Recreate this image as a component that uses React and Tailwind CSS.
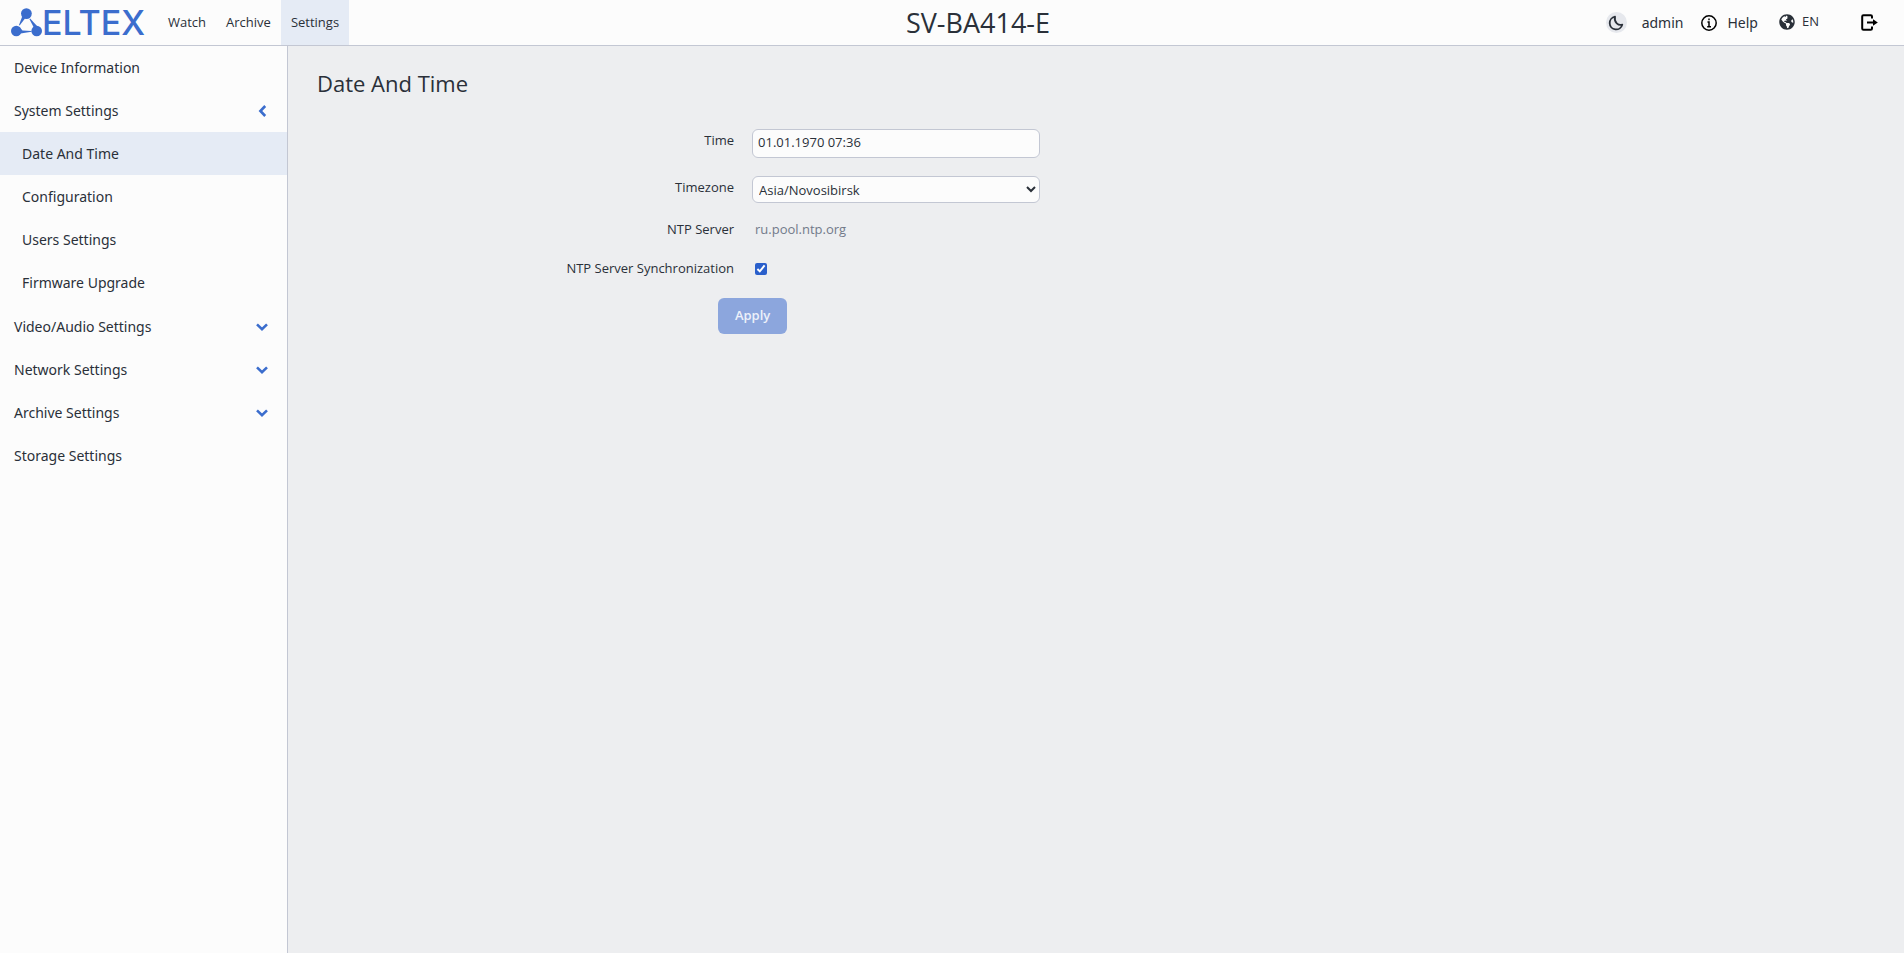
import { useState } from "react";
import { FaGlobeAmericas } from "react-icons/fa";

const tabs = ["Watch", "Archive", "Settings"];

const menu = [
    { title: "Device Information" },
    {
        title: "System Settings",
        children: ["Date And Time", "Configuration", "Users Settings", "Firmware Upgrade"],
    },
    { title: "Video/Audio Settings", children: [] },
    { title: "Network Settings", children: [] },
    { title: "Archive Settings", children: [] },
    { title: "Storage Settings" },
];

function Logo() {
    return (
        <a href="#" aria-label="Eltex" className="flex items-center pl-[11px] w-[158px] text-[#3b6dcd]">
            <svg viewBox="0 0 31 29" className="w-[31px] h-[29px] shrink-0" fill="currentColor">
                <circle cx="15.4" cy="5.6" r="5.4" />
                <circle cx="5.3" cy="23" r="5.3" />
                <circle cx="25.7" cy="23" r="5.3" />
                <path d="M11.2 8.5 14 10.6 8.6 17.4 8 17Z" />
                <path d="M18.4 11 19.1 10.600 26.500 18.500 22.800 19.500Z" />
                <path d="M9.500 20.500 11.500 22.600 20.600 23V23.700L9.500 25.500Z" />
            </svg>
            <span className="font-['Inter',sans-serif] text-[34px] font-medium leading-8">ELTEX</span>
        </a>
    );
}

function Chevron({ open }) {
    return (
        <svg viewBox="0 0 12 12" className="w-3 h-3 text-[#3b6dcd]" fill="none" stroke="currentColor" strokeWidth="2.6">
            <path d={open ? "M9.2 1 4.4 6l4.800 5" : "M1 3.4l5 4.8 5-4.8"} />
        </svg>
    );
}

function Header() {
    return (
        <header className="flex h-[46px] shrink-0 items-stretch border-b border-[#c3c7d3] bg-[#fcfcfc]">
            <div className="flex flex-1">
                <Logo />
                <nav className="flex text-[13px]">
                    {tabs.map(tab => (
                        <a key={tab} href="#"
                            className={`flex items-center px-2.5 ${tab === "Settings" ? "bg-[#e5ebf5]" : ""}`}>
                            {tab}
                        </a>
                    ))}
                </nav>
            </div>
            <div className="flex items-center pl-[52px] text-[27px] leading-10">SV-BA414-E</div>
            <div className="flex flex-1 items-center justify-end font-['Noto_Sans',sans-serif] text-sm">
                <button type="button" aria-label="Theme"
                    className="flex w-[21px] h-[21px] items-center justify-center rounded-full bg-[#e6e8ed]">
                    <svg viewBox="0 0 16 16" className="w-4 h-4" fill="none" stroke="currentColor" strokeWidth="1.8" strokeLinejoin="round">
                        <path d="M7 1.700A6.400 6.400 0 1 0 14.300 9.600C10.500 11 5.800 7.400 7 1.700Z" />
                    </svg>
                </button>
                <span className="ml-[15px]">admin</span>
                <a href="#" className="ml-[18px] flex items-center gap-2.5">
                    <svg viewBox="0 0 16 16" className="w-4 h-4 text-black" fill="none" stroke="currentColor">
                        <circle cx="8" cy="8" r="7.200" strokeWidth="1.500" />
                        <path d="M8 3.500V5.300M6.500 7H8v4.500M6.200 11.800h3.800" strokeWidth="1.500" />
                    </svg>
                    Help
                </a>
                <button type="button" className="ml-[21px] mb-0.5 flex items-center gap-[7px] font-['Open_Sans',sans-serif] text-[13px]">
                    <FaGlobeAmericas className="w-4 h-4" />
                    EN
                </button>
                <a href="#" aria-label="Log out" className="ml-[42px] mr-[26px] text-black">
                    <svg viewBox="0 0 17 17" className="w-[17px] h-[17px]" fill="none" stroke="currentColor" strokeWidth="2">
                        <path d="M11 4.500V2.500Q11 1.200 9.700 1.200H2.500Q1.200 1.200 1.200 2.500v12Q1.200 15.800 2.500 15.800h7.200q1.300 0 1.300-1.300v-2" />
                        <path d="M6 8.500h8" />
                        <path d="M12 5.200 16.800 8.500 12 11.800Z" fill="currentColor" stroke="none" />
                    </svg>
                </a>
            </div>
        </header>
    );
}

function Sidebar({ page, setPage }) {
    return (
        <aside className="w-72 shrink-0 border-r border-[#c3c7d3] bg-[#fcfcfc] font-['Noto_Sans',sans-serif] text-sm">
            <ul>
                {menu.map(item => (
                    <li key={item.title}>
                        <button type="button" className="flex h-[43px] w-full items-center justify-between pl-3.5 pr-[19px]">
                            {item.title}
                            {item.children && <Chevron open={item.children.length > 0} />}
                        </button>
                        {item.children?.length > 0 && (
                            <ul className="pb-px">
                                {item.children.map(child => (
                                    <li key={child}>
                                        <button type="button" onClick={() => setPage(child)}
                                            className={`flex h-[43px] w-full items-center pl-[22px] ${page === child ? "bg-[#e5ebf5]" : ""}`}>
                                            {child}
                                        </button>
                                    </li>
                                ))}
                            </ul>
                        )}
                    </li>
                ))}
            </ul>
        </aside>
    );
}

function Row({ id, label, children, className }) {
    return (
        <div className={`flex gap-[18px] ${className}`}>
            <label htmlFor={id} className="w-[27.6%] shrink-0 text-right leading-[22px]">{label}</label>
            {children}
        </div>
    );
}

function DateTimeForm() {
    const [time, setTime] = useState("01.01.1970 07:36");
    const [sync, setSync] = useState(true);

    return (
        <form className="mt-8 text-[13px]">
            <Row id="time" label="Time" className="h-[47px]">
                <input id="time" value={time} onChange={e => setTime(e.target.value)}
                    className="h-[29px] w-72 rounded-md border border-[#c3c7d3] bg-[#fcfcfc] px-[5px] pb-[3px]" />
            </Row>
            <Row id="timezone" label="Timezone" className="h-[42px]">
                <select id="timezone" className="h-[27px] w-72 rounded-md border border-[#c3c7d3] bg-[#fcfcfc] px-0.5">
                    <option>Asia/Novosibirsk</option>
                </select>
            </Row>
            <Row id="ntp" label="NTP Server" className="h-[39px]">
                <input id="ntp" placeholder="ru.pool.ntp.org" readOnly
                    className="h-[22px] w-72 px-[3px] placeholder:text-[#727a8a]" />
            </Row>
            <Row id="sync" label="NTP Server Synchronization" className="h-[41px]">
                <input id="sync" type="checkbox" checked={sync} onChange={e => setSync(e.target.checked)}
                    className="ml-[3px] mt-1.5 h-3 w-3 accent-[#2a5fcb]" />
            </Row>
            <div className="flex w-[57.5%] justify-center">
                <button type="button" disabled
                    className="h-9 rounded-md bg-[#8ca6dd] px-[17px] font-semibold text-[#edf1fa]">
                    Apply
                </button>
            </div>
        </form>
    );
}

export default function App() {
    const [page, setPage] = useState("Date And Time");

    return (
        <div className="flex min-h-screen flex-col bg-[#edeef0] font-['Open_Sans',sans-serif] text-[#2a3039]">
            <Header />
            <div className="flex flex-1">
                <Sidebar page={page} setPage={setPage} />
                <main className="flex-1">
                    <h1 className="mt-[23px] pl-[29px] text-[22px] leading-7">{page}</h1>
                    <DateTimeForm />
                </main>
            </div>
        </div>
    );
}
